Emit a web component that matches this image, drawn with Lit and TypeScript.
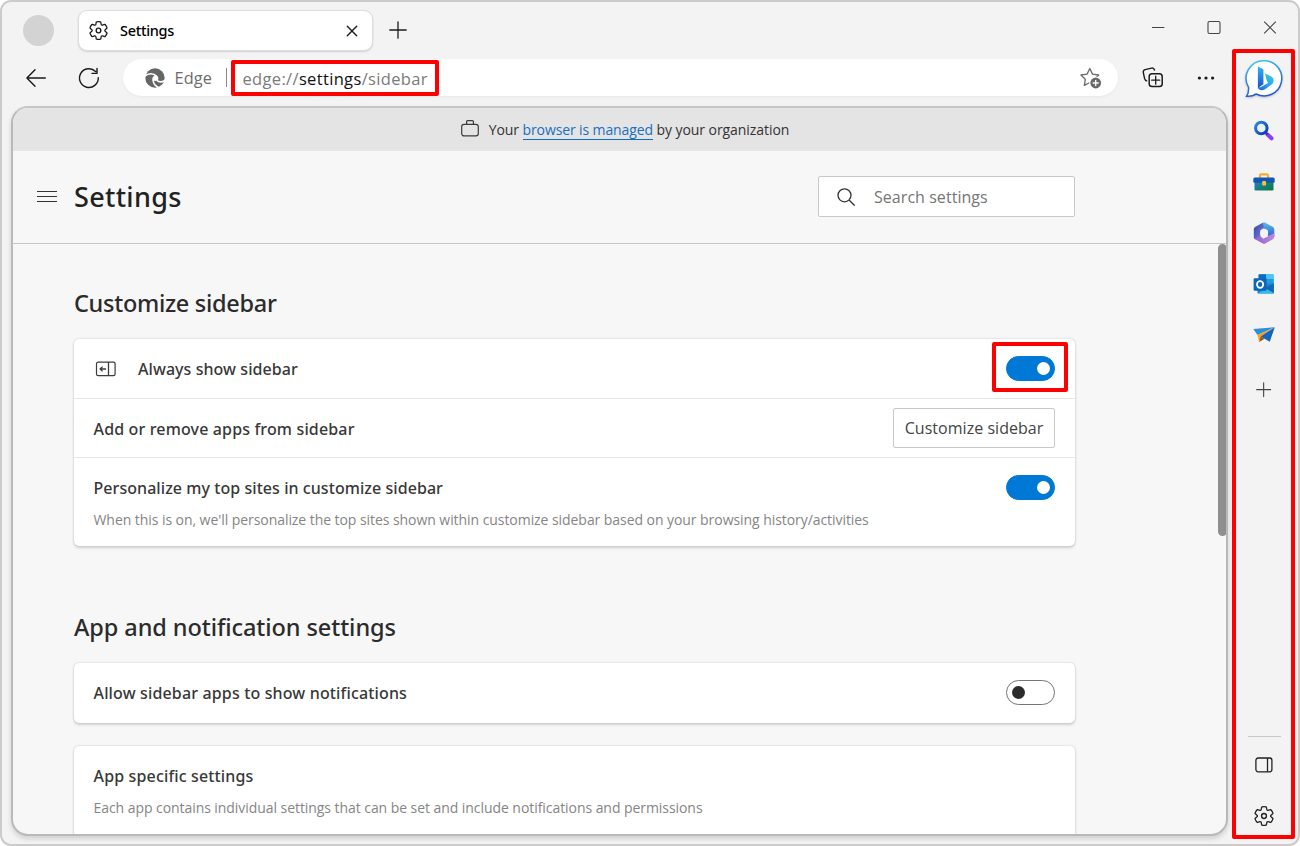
import { LitElement, html, css, svg, nothing } from "lit";
import { customElement, property } from "lit/decorators.js";
import { classMap } from "lit/directives/class-map.js";

const gear = svg`<path fill="none" stroke="currentColor" stroke-width="1.2" stroke-linejoin="round" d="M1.91 7.38A8.5 8.5 0 0 1 3.7 4.3a.5.5 0 0 1 .54-.13l1.92.68a1 1 0 0 0 1.32-.76l.36-2a.5.5 0 0 1 .4-.4 8.53 8.53 0 0 1 3.55 0c.2.04.35.2.38.4l.37 2a1 1 0 0 0 1.32.76l1.92-.68a.5.5 0 0 1 .54.13 8.5 8.5 0 0 1 1.78 3.08c.06.2 0 .4-.15.54l-1.56 1.32a1 1 0 0 0 0 1.52l1.56 1.32a.5.5 0 0 1 .15.54 8.5 8.5 0 0 1-1.78 3.08.5.5 0 0 1-.54.13l-1.92-.68a1 1 0 0 0-1.32.76l-.37 2a.5.5 0 0 1-.38.4 8.53 8.53 0 0 1-3.56 0 .5.5 0 0 1-.39-.4l-.36-2a1 1 0 0 0-1.32-.76l-1.92.68a.5.5 0 0 1-.54-.13 8.5 8.5 0 0 1-1.78-3.08.5.5 0 0 1 .15-.54l1.56-1.32a1 1 0 0 0 0-1.52L2.06 7.92a.5.5 0 0 1-.15-.54Z"/><circle cx="10" cy="10" r="2.2" fill="none" stroke="currentColor" stroke-width="1.3"/>`;

const line = (d: string, w = 1.3) =>
  svg`<path d=${d} fill="none" stroke="currentColor" stroke-width=${w} stroke-linecap="round" stroke-linejoin="round"/>`;

const glyphs: Record<string, [number, number, unknown]> = {
  gear: [20, 20, gear],
  close: [12, 12, line("M1.3 1.3l9.4 9.4M10.7 1.3l-9.4 9.4", 1.4)],
  plus: [18, 18, line("M9 .8v16.4M.8 9h16.4", 1.3)],
  min: [14, 14, svg`<path d="M1 7.5h12.4" stroke="#444" stroke-width="1"/>`],
  max: [14, 14, svg`<rect x="1" y="1.500" width="12" height="12" rx="1.5" fill="none" stroke="#444" stroke-width="1.1"/>`],
  exit: [14, 14, svg`<path d="M1.2 1.7l11.6 11.6M12.8 1.7L1.2 13.3" stroke="#444" stroke-width="1.1"/>`],
  back: [20, 20, line("M19.3 10H.9M9 1.7L.9 10 9 18.3", 1.4)],
  reload: [22, 22, line("M20.3 10.8A9.4 9.4 0 1 1 17.6 4.5M19 1.4v5h-5", 1.4)],
  edge: [20, 20, svg`
    <circle cx="10" cy="10" r="9.7" fill="#666"/>
    <circle cx="10.600" cy="10.200" r="2.700" fill="#fff"/>
    <g fill="none" stroke="#fff" stroke-width="1.700">
      <path d="M11.500 8.200C8.400 4.900 3.500 5 -.4 8.200"/>
      <path d="M8.500 9.200C7 13 9 17.300 14 20"/>
      <path d="M11.800 12.200C14 14.700 17.800 14.600 20.600 11.600"/>
    </g>`],
  star: [22, 22, svg`
    <path d="M9.800 1.500l2.700 5.600 6.200.9-4.500 4.300 1.100 6.100-5.500-2.900-5.500 2.900 1-6.100L.9 8l6.200-.9z" fill="none" stroke="#6a6a6a" stroke-width="1.300" stroke-linejoin="round"/>
    <circle cx="15.700" cy="16" r="6.600" fill="#fff"/><circle cx="15.700" cy="16" r="5.400" fill="#6a6a6a"/>
    <path d="M15.700 13v6M12.700 16h6" stroke="#fff" stroke-width="1.300"/>`],
  collections: [22, 22, svg`${line("M4.700 13.800C3.300 13.400 2.900 12.600 2.500 11.200L1.300 5.500C1 4 1.600 3.100 3.100 2.600L9.500 1.100C11 .8 12 1.200 12.500 3", 1.4)}
    <rect x="7.200" y="6.800" width="13" height="12.800" rx="2.800" fill="none" stroke="currentColor" stroke-width="1.500"/>${line("M13.700 9.200v8M9.700 13.200h8", 1.3)}`],
  dots: [18, 6, svg`<circle cx="2.400" cy="3" r="1.600"/><circle cx="9" cy="3" r="1.600"/><circle cx="15.600" cy="3" r="1.600"/>`],
  bag: [20, 20, svg`<rect x="1.700" y="5.300" width="16.600" height="11.600" rx="2.300" fill="none" stroke="#3a3a3a" stroke-width="1.200"/><path d="M6.600 5.200V2.600Q6.600 1.600 7.600 1.600h4.800Q13.400 1.600 13.400 2.600v2.600" fill="none" stroke="#3a3a3a" stroke-width="1.200"/>`],
  menu: [20, 14, svg`<path d="M0 1.500h20M0 6.500h20M0 11.500h20" stroke="#333" stroke-width="1.100"/>`],
  search: [18, 18, line("M12.300 12.300l5 5M14 7.300a6.500 6.500 0 1 1-13 0a6.500 6.500 0 0 1 13 0", 1.3)],
  dock: [22, 16, svg`<rect x="1.500" y="1.200" width="18.600" height="13.400" rx="1.600" fill="none" stroke="#3c3c3c" stroke-width="1.200"/><path d="M13.500 1v13.600M11 8H5.200M7.600 5.600L5.100 8l2.500 2.400" fill="none" stroke="#3c3c3c" stroke-width="1.300"/>`],
  panel: [18, 16, svg`<rect x=".9" y="1" width="16" height="13.800" rx="2.200" fill="none" stroke="#222" stroke-width="1.300"/><path d="M12.500 1v13.800" stroke="#222" stroke-width="1.300"/>`],
  bing: [42, 42, svg`
    <defs><linearGradient id="ring" x1="0" y1="0" x2=".3" y2="1"><stop offset="0" stop-color="#3fd0f2"/><stop offset=".45" stop-color="#2f8fe6"/><stop offset="1" stop-color="#2756cf"/></linearGradient>
    <linearGradient id="b1" x1="0" y1="0" x2="0" y2="1"><stop offset="0" stop-color="#35b4f2"/><stop offset="1" stop-color="#1550cf"/></linearGradient>
    <linearGradient id="b2" x1="1" y1="0" x2="0" y2="1"><stop offset="0" stop-color="#35d6d2"/><stop offset=".5" stop-color="#2aa7ee"/><stop offset="1" stop-color="#1a62d8"/></linearGradient></defs>
    <path d="M21 2.700A17.600 17.600 0 1 1 13.200 36C9.800 38.200 6.700 38.600 3.600 38.200C5.600 35.400 5.800 32.500 5.600 29.300A17.600 17.600 0 0 1 21 2.700z" fill="#fff" stroke="url(#ring)" stroke-width="1.500"/>
    <path d="M14.900 8.500l4.600 2.200q.9.500.9 1.500v14l-5.500 3.900z" fill="url(#b1)"/>
    <path d="M22.100 15.500l6.300 3q2.600 1.400 2.300 4.500-.2 2.200-2 3.400l-7 5.100q-3.400 1.600-5.800-.2-1.300-1-1-3 1.200 1.800 3.500.5l6.600-3.900-1.500-3.200z" fill="url(#b2)"/>`],
  find: [22, 22, svg`<defs><linearGradient id="lens" x1="0" y1="0" x2="1" y2="1"><stop offset="0" stop-color="#2d8ce4"/><stop offset="1" stop-color="#0a37b5"/></linearGradient></defs>
    <path d="M14.500 14.500l4 3.800" stroke="#8a3ff0" stroke-width="4" stroke-linecap="round"/><path d="M12 12l2.500 2.400" stroke="#4a2c85" stroke-width="2.400"/><circle cx="8.300" cy="8" r="5.800" fill="#e9f2fb" stroke="url(#lens)" stroke-width="3"/>`],
  toolbox: [24, 20, svg`<defs><linearGradient id="tb" x1="0" y1="0" x2="1" y2="1"><stop offset="0" stop-color="#2383c9"/><stop offset="1" stop-color="#087a38"/></linearGradient></defs>
    <path d="M8 6V3.600Q8 2.300 9.300 2.300h5.400Q16 2.300 16 3.600V6" fill="none" stroke="#f1b02c" stroke-width="2.200"/>
    <rect x="2.500" y="9" width="19" height="9.500" rx="1.300" fill="url(#tb)"/><path d="M2.800 5.600h18.400q1.500 0 1.500 1.500v2.400q0 1.200-1.200 1.200h-19q-1.200 0-1.200-1.200V7.100q0-1.500 1.500-1.500z" fill="#1257b4"/>
    <rect x="10.200" y="9" width="3.800" height="4.600" rx="1.200" fill="#f8c433"/>`],
  m365: [22, 24, svg`<defs><linearGradient id="m1" x1="0" y1="0" x2="1" y2="1"><stop offset="0" stop-color="#2947a8"/><stop offset="1" stop-color="#8b7fe0"/></linearGradient>
    <linearGradient id="m2" x1="0" y1="0" x2="0" y2="1"><stop offset="0" stop-color="#55bdf0"/><stop offset="1" stop-color="#2f62c4"/></linearGradient>
    <linearGradient id="m3" x1="0" y1="0" x2="1" y2="0"><stop offset="0" stop-color="#8d65d2"/><stop offset="1" stop-color="#bd86dc"/></linearGradient></defs>
    <path d="M9.800 1.700Q11 1 12.300 1.700l7.800 4.400q1.200.8 1.200 2.200v7.500l-6.600-1V9.300L7.700 6z" fill="url(#m2)"/>
    <path d="M9.800 1.700L2 6.100Q.8 6.900.8 8.300v7.900q0 1.400 1.200 2l3.500.3 2-3.200V9.300l3.500-2.200z" fill="url(#m1)"/>
    <path d="M1.400 17.600q.5.700 1.200 1l7.200 4q1.300.7 2.500 0l7.500-4.300q1.500-.9 1.500-2.800v-3.400l-6.600 3.300-4.400 2.300-2.800-2.400z" fill="url(#m3)"/>
    <circle cx="11.100" cy="12" r="4" fill="#f3f3f3"/>`],
  outlook: [22, 22, svg`<rect x="5.600" y="1.300" width="15" height="13" rx="1" fill="#38b5ee"/><path d="M5.600 2.300q0-1 1-1h6.600v4.800H5.600z" fill="#0f6cbd"/><path d="M13.200 1.300h6.400q1 0 1 1v3.800h-7.400z" fill="#48c6f5"/><path d="M13.200 6h7.400v5h-7.400z" fill="#2299dd"/>
    <path d="M4.400 10.500l16.400-.1v9.200q0 1-1 1H5.400q-1 0-1-1z" fill="#1687d4"/><path d="M20.800 10.400v9.200q0 1-1 1L11 15.400z" fill="#1167b4"/><path d="M20.800 20l-8-4.500-8 5.100h15z" fill="#35b9ef"/>
    <rect x=".6" y="5.200" width="13" height="12.600" rx="1.200" fill="#0d65b9"/><ellipse cx="7.100" cy="11.500" rx="3.100" ry="3.300" fill="none" stroke="#fff" stroke-width="1.800"/>`],
  plane: [24, 18, svg`<path d="M1.300 3L22.800 1.200 5.500 8.900z" fill="#2a8fdc"/><path d="M5.500 8.700L22.800 1.200 8.600 10.700l-1.500 5.200z" fill="#f3a61c"/><path d="M22.800 1.200L17.800 15.700 8.600 10.500z" fill="#1066c0"/><path d="M7.100 16l1.500-5.500 4 2.300z" fill="#9b560c"/>`],
};

@customElement("ui-icon")
class UiIcon extends LitElement {
  @property() name = "gear";
  @property({ type: Number }) scale = 1;
  static styles = css`
    :host { display: block; flex: none; }
    svg { display: block; fill: currentColor; overflow: visible; }
  `;
  render() {
    const [w, h, body] = glyphs[this.name];
    return html`<svg width=${w * this.scale} height=${h * this.scale} viewBox="0 0 ${w} ${h}">${body}</svg>`;
  }
}

@customElement("ui-toggle")
class UiToggle extends LitElement {
  @property({ type: Boolean }) on = false;
  static styles = css`
    :host { display: block; flex: none; }
    .track { box-sizing: border-box; width: 49px; height: 25px; border-radius: 13px; display: flex; align-items: center; padding: 0 5px; border: 1px solid #767676; background: #fff; }
    .track.on { background: #0078d6; border-color: #0078d6; justify-content: flex-end; padding-right: 4.500px; }
    .knob { width: 13px; height: 13px; border-radius: 50%; background: #2b2b2b; }
    .on .knob { background: #fff; }
  `;
  render() {
    return html`<div class=${classMap({ track: true, on: this.on })}><div class="knob"></div></div>`;
  }
}

interface Row { title: string; cls?: string; desc?: string; icon?: string; control?: "on" | "off" | "button"; marked?: boolean }

@customElement("settings-card")
class SettingsCard extends LitElement {
  @property({ attribute: false }) rows: Row[] = [];
  static styles = css`
    :host { display: block; background: #fff; border-radius: 5px; box-shadow: 0 0 2px rgba(0,0,0,.16), 0 1.500px 3px rgba(0,0,0,.15); }
    .row { display: flex; align-items: flex-start; box-sizing: border-box; min-height: 59px; padding: 0 20px 0 20px; border-top: 1px solid #e6e6e6; }
    .row:first-child { border-top: 0; }
    .icon { margin: 22px 21px 0 1.500px; color: #333; }
    .text { flex: 1; }
    .title { margin-top: 17.500px; font: 500 16px/24px "Noto Sans", sans-serif; letter-spacing: .15px; color: #383838; white-space: nowrap; }
    .tight { letter-spacing: .06px; }
    .desc { margin: 10px 0 14px; font: 400 14px/20px "Open Sans", sans-serif; letter-spacing: -.06px; color: #858585; white-space: nowrap; }
    .toggle { position: relative; margin-top: 17px; }
    .mark { position: absolute; inset: -14px -13px -11px -14px; border: 4px solid #f00; border-radius: 2px; }
    .btn { box-sizing: border-box; height: 40px; margin-top: 9px; padding: 0; width: 162px; border: 1px solid #c9c9c9; border-radius: 2px; background: #fff; font: 400 16px/38px "Open Sans", sans-serif; letter-spacing: .04px; color: #444; text-align: center; }
  `;
  render() {
    return html`${this.rows.map((r) => html`
      <div class="row">
        ${r.icon ? html`<ui-icon class="icon" name=${r.icon}></ui-icon>` : nothing}
        <div class="text">
          <div class="title ${r.cls ?? ""}">${r.title}</div>
          ${r.desc ? html`<div class="desc">${r.desc}</div>` : nothing}
        </div>
        ${r.control === "button" ? html`<button class="btn">Customize sidebar</button>` : nothing}
        ${r.control === "on" || r.control === "off"
          ? html`<div class="toggle"><ui-toggle ?on=${r.control === "on"}></ui-toggle>${r.marked ? html`<div class="mark"></div>` : nothing}</div>`
          : nothing}
      </div>`)}`;
  }
}

const sidebarRows: Row[] = [
  { title: "Always show sidebar", cls: "tight", icon: "dock", control: "on", marked: true },
  { title: "Add or remove apps from sidebar", control: "button" },
  { title: "Personalize my top sites in customize sidebar", cls: "tight", control: "on",
    desc: "When this is on, we'll personalize the top sites shown within customize sidebar based on your browsing history/activities" },
];
const notifyRows: Row[] = [{ title: "Allow sidebar apps to show notifications", control: "off" }];
const appRows: Row[] = [{ title: "App specific settings", desc: "Each app contains individual settings that can be set and include notifications and permissions" }];

@customElement("app-root")
class AppRoot extends LitElement {
  static styles = css`
    :host { display: block; background: #fff; }
    * { box-sizing: border-box; }
    .window { width: 1300px; height: 846px; border: 2px solid #cbcbcb; border-radius: 11px; background: #f3f3f3; display: grid; grid-template: 49px 1fr / 1226px 1fr; overflow: hidden; font-family: "Open Sans", sans-serif; color: #1b1b1b; }
    .titlebar { grid-column: 1 / 3; display: flex; align-items: flex-start; padding: 0 19px 0 21px; }
    .avatar { width: 31px; height: 31px; border-radius: 50%; background: #d3d3d3; margin-top: 13px; }
    .tab { display: flex; align-items: center; margin: 8px 0 0 24px; width: 295px; height: 41px; border-radius: 9px; background: #fff; border: 1px solid #dcdcdc; box-shadow: 0 1px 2px rgba(0,0,0,.14); padding: 0 14px 0 8.500px; }
    .tab-title { flex: 1; margin: -2px 0 0 11.500px; font: 500 14.500px/20px "Noto Sans", sans-serif; letter-spacing: -.3px; color: #000; }
    .new { margin: 19px auto 0 16px; }
    .controls { display: flex; gap: 42px; margin: 18px 2px 0 0; }
    .main { display: flex; flex-direction: column; min-width: 0; }
    .toolbar { display: flex; align-items: center; height: 53px; margin-bottom: 2px; padding: 0 10px 0 24px; }
    .toolbar > * { flex: none; }
    .reload { margin-left: 32px; }
    .address { display: flex; align-items: center; width: 995px; height: 37px; margin: 0 24px 0 23px; border-radius: 19px; background: #fff; box-shadow: 0 1px 3px rgba(0,0,0,.05); padding: 0 16px 0 21.500px; font-size: 16.300px; color: #6c6c6c; }
    .brand { margin: 1px 0 0 10px; width: 51px; letter-spacing: .1px; }
    .bar { width: 1px; height: 19px; background: #8a8a8a; }
    .url { margin: 0 auto 0 4px; width: 208px; height: 36px; border: 4px solid #f00; border-radius: 2px; padding-left: 8px; font-size: 16.500px; line-height: 29px; letter-spacing: .34px; color: #7a7a7a; white-space: nowrap; }
    .url b { font-weight: 400; color: #111; }
    .dots { margin-left: 33px; }
    .page { margin-left: 9px; width: 1217px; height: 730px; border: 2px solid #b9b9b9; border-top-color: #c6c6c6; border-radius: 17px; overflow: hidden; background: #f7f7f7; box-shadow: 0 3px 5px rgba(0,0,0,.14); display: flex; flex-direction: column; }
    .banner { display: flex; align-items: center; justify-content: center; flex: none; height: 43px; background: #e4e4e4; font-size: 14px; letter-spacing: -.06px; color: #333; padding: 0 0 0 10px; }
    .banner ui-icon { margin: -1px 9px 0 0; }
    .link { color: #1a6fbf; text-decoration: none; border-bottom: 1px solid #0f6cbd; letter-spacing: -.12px; }
    .head { display: flex; align-items: center; flex: none; height: 93px; border-bottom: 1px solid #c6c6c6; padding: 0 151px 0 24px; }
    .h1 { margin: 0 auto 0 17px; font: 500 27px/36px "Noto Sans", sans-serif; letter-spacing: .32px; color: #222; }
    .field { display: flex; align-items: center; width: 257px; height: 41px; margin-top: -1px; background: #fff; border: 1px solid #c9c9c9; border-radius: 2px; font-size: 16px; letter-spacing: .05px; color: #757575; padding-left: 18px; }
    .field ui-icon { margin-right: 19px; color: #333; }
    .menu { margin-top: -1px; }
    .scroller { display: flex; flex: 1; min-height: 0; }
    .content { flex: 1; padding: 0 143px 0 60.500px; }
    .thumb { width: 9px; height: 292px; border-radius: 5px; background: #8f8f8f; margin-right: -1px; }
    .h2 { margin-left: .5px; font: 500 23.500px/34px "Noto Sans", sans-serif; color: #2b2b2b; white-space: nowrap; }
    .h2.first { padding-top: 42px; letter-spacing: -.3px; }
    .h2.second { padding-top: 64px; letter-spacing: -.08px; }
    .c1 { margin-top: 19px; height: 207px; }
    .c2 { margin-top: 19px; height: 59.500px; }
    .c3 { margin-top: 23.500px; height: 120px; }
    .apps { display: flex; flex-direction: column; align-items: center; margin: -2px 0 0 4px; width: 63px; height: 790px; border: 4px solid #f00; border-radius: 2px; color: #222; padding-left: 1px; }
    .apps > * { flex: none; }
    .bing { margin-top: 5px; filter: drop-shadow(0 1px 1px rgba(0,0,0,.2)); }
    .a1 { margin-top: 20px; } .a2 { margin-top: 30px; } .a3 { margin-top: 29px; } .a4 { margin-top: 28px; } .a5 { margin-top: 31px; } .a6 { margin-top: 38px; color: #444; }
    .rule { width: 33px; height: 1px; background: #c9c9c9; margin-top: auto; }
    .p1 { margin-top: 20px; } .p2 { margin: 32px 0 8px; }
  `;
  render() {
    return html`
      <div class="window">
        <div class="titlebar">
          <div class="avatar"></div>
          <div class="tab"><ui-icon name="gear" scale="1.05"></ui-icon><span class="tab-title">Settings</span><ui-icon name="close"></ui-icon></div>
          <ui-icon class="new" name="plus"></ui-icon>
          <div class="controls"><ui-icon name="min"></ui-icon><ui-icon name="max"></ui-icon><ui-icon name="exit"></ui-icon></div>
        </div>
        <div class="main">
          <div class="toolbar">
            <ui-icon name="back"></ui-icon>
            <ui-icon class="reload" name="reload"></ui-icon>
            <div class="address">
              <ui-icon name="edge"></ui-icon><span class="brand">Edge</span><span class="bar"></span>
              <div class="url">edge://<b>settings</b>/sidebar</div>
              <ui-icon name="star"></ui-icon>
            </div>
            <ui-icon name="collections"></ui-icon>
            <ui-icon class="dots" name="dots"></ui-icon>
          </div>
          <div class="page">
            <div class="banner"><ui-icon name="bag"></ui-icon><span>Your <a class="link">browser is managed</a> by your organization</span></div>
            <div class="head">
              <ui-icon class="menu" name="menu"></ui-icon>
              <div class="h1">Settings</div>
              <div class="field"><ui-icon name="search"></ui-icon>Search settings</div>
            </div>
            <div class="scroller">
              <div class="content">
                <div class="h2 first">Customize sidebar</div>
                <settings-card class="c1" .rows=${sidebarRows}></settings-card>
                <div class="h2 second">App and notification settings</div>
                <settings-card class="c2" .rows=${notifyRows}></settings-card>
                <settings-card class="c3" .rows=${appRows}></settings-card>
              </div>
              <div class="thumb"></div>
            </div>
          </div>
        </div>
        <div class="apps">
          <ui-icon class="bing" name="bing"></ui-icon>
          <ui-icon class="a1" name="find"></ui-icon>
          <ui-icon class="a2" name="toolbox"></ui-icon>
          <ui-icon class="a3" name="m365"></ui-icon>
          <ui-icon class="a4" name="outlook"></ui-icon>
          <ui-icon class="a5" name="plane"></ui-icon>
          <ui-icon class="a6" name="plus" scale=".85"></ui-icon>
          <div class="rule"></div>
          <ui-icon class="p1" name="panel"></ui-icon>
          <ui-icon class="p2" name="gear" scale="1.1"></ui-icon>
        </div>
      </div>`;
  }
}
